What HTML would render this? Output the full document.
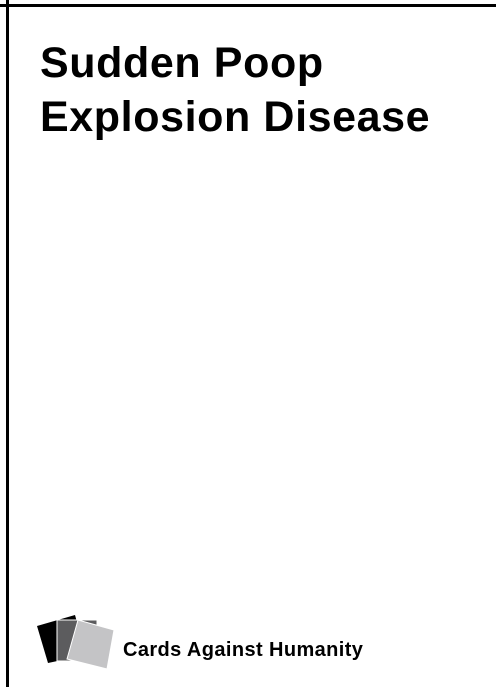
<!DOCTYPE html>
<html><head><style>
html,body{margin:0;padding:0;background:#fff;width:496px;height:687px;overflow:hidden;position:relative;font-family:"Liberation Sans",Arial,sans-serif;}
.h{position:absolute;left:0;top:4px;width:496px;height:3px;background:#000;}
.v{position:absolute;left:6px;top:0;width:3px;height:687px;background:#000;}
.t{position:absolute;left:40px;top:36px;font-size:43px;line-height:54px;font-weight:bold;letter-spacing:0.6px;color:#000;white-space:nowrap;}
.b{position:absolute;left:123px;top:640px;font-size:20px;line-height:20px;font-weight:bold;letter-spacing:0.4px;color:#000;white-space:nowrap;}
svg{position:absolute;left:0;top:0;}
</style></head><body>
<div class="h"></div><div class="v"></div>
<div class="t">Sudden Poop<br>Explosion Disease</div>
<svg width="130" height="687" viewBox="0 0 130 687">
<polygon points="37,626 75,615 86,655 48,663" fill="#000"/>
<polygon points="57,620 97,620 97,661 57,661" fill="#5c5c5e" stroke="#fff" stroke-width="1"/>
<polygon points="78,620 114,630 107,669 67,659" fill="#c4c4c6" stroke="#fff" stroke-width="1"/>
</svg>
<div class="b">Cards Against Humanity</div>
</body></html>
